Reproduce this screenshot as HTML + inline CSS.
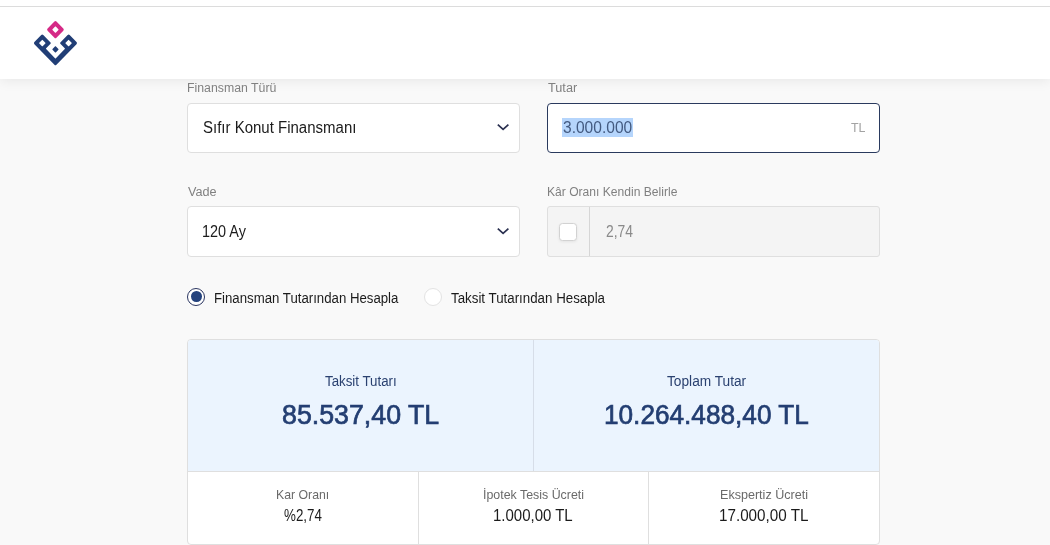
<!DOCTYPE html>
<html lang="tr">
<head>
<meta charset="utf-8">
<title>Finansman Hesaplama</title>
<style>
*{box-sizing:border-box;margin:0;padding:0}
html,body{width:1050px;height:545px;overflow:hidden;background:#f9f9f9;font-family:"Liberation Sans",sans-serif;}
body{position:relative}
.abs{position:absolute}
.t{position:absolute;white-space:nowrap;transform-origin:0 50%;line-height:1.2}
#tx{position:absolute;left:0;top:0;width:1050px;height:545px;will-change:transform}
.topline{left:0;top:0;width:1050px;height:7px;background:#fff;border-bottom:1px solid #dcdcdc}
.header{left:0;top:7px;width:1050px;height:72px;background:#fff;box-shadow:0 2px 12px rgba(0,0,0,.075)}
.box{background:#fff;border:1px solid #dfdfdf;border-radius:4px}
</style>
</head>
<body>
<div class="abs header"></div>
<div class="abs topline"></div>
<svg class="abs" style="left:30px;top:17px" width="52" height="52" viewBox="0 0 52 52">
  <g transform="translate(25.45,3.55) scale(1.02,1.043) rotate(45)">
    <rect x="0" y="0" width="12.3" height="12.3" rx="1.4" fill="#d52a86"/>
    <rect x="3.9" y="3.9" width="4.5" height="4.5" rx="0.4" fill="#fff"/>
    <path d="M1.4 18.3 H11.5 Q12.3 18.3 12.3 19.1 V25.2 Q12.3 25.8 12.9 25.8 H25.2 Q25.8 25.8 25.8 25.2 V12.9 Q25.8 12.3 25.2 12.3 H19.1 Q18.3 12.3 18.3 11.5 V1.4 Q18.3 0 19.7 0 H29.2 Q30.6 0 30.6 1.4 V29.2 Q30.6 30.6 29.2 30.6 H1.4 Q0 30.6 0 29.2 V19.7 Q0 18.3 1.4 18.3 Z" fill="#213e76"/>
    <rect x="22.1" y="3.9" width="4.6" height="4.6" rx="0.4" fill="#fff"/>
    <rect x="3.9" y="22.1" width="4.6" height="4.6" rx="0.4" fill="#fff"/>
    <rect x="17.3" y="17.3" width="4.5" height="4.5" rx="0.4" fill="#213e76"/>
  </g>
</svg>

<div class="abs box" style="left:187px;top:103px;width:333px;height:50px"></div>
<svg class="abs" style="left:496px;top:122px" width="15" height="11" viewBox="0 0 15 11"><path d="M1.8 2.6 L7.1 7.3 L12.4 2.6" fill="none" stroke="#2a3050" stroke-width="1.7" stroke-linecap="butt" stroke-linejoin="miter"/></svg>

<div class="abs box" style="left:547px;top:103px;width:333px;height:50px;border-color:#2a3a5e"></div>
<div class="abs" style="left:562px;top:118px;width:71px;height:18.5px;background:#b5d5fc"></div>

<div class="abs box" style="left:187px;top:206px;width:333px;height:51px"></div>
<svg class="abs" style="left:496px;top:226px" width="15" height="11" viewBox="0 0 15 11"><path d="M1.8 2.6 L7.1 7.3 L12.4 2.6" fill="none" stroke="#2a3050" stroke-width="1.7" stroke-linecap="butt" stroke-linejoin="miter"/></svg>

<div class="abs box" style="left:547px;top:206px;width:333px;height:51px;background:#f4f4f4;border-radius:3px"></div>
<div class="abs" style="left:589px;top:207px;width:1px;height:49px;background:#d6d6d6"></div>
<div class="abs" style="left:559px;top:223px;width:18px;height:18px;background:#fff;border:1px solid #d2d2d2;border-radius:3.5px;box-shadow:0 1px 3px rgba(0,0,0,.07)"></div>

<div class="abs" style="left:186.7px;top:287.6px;width:18.4px;height:18.4px;border-radius:50%;border:1.2px solid #2a3560;background:#fff"></div>
<div class="abs" style="left:190.9px;top:291px;width:10.8px;height:10.8px;border-radius:50%;background:#24427c"></div>
<div class="abs" style="left:423.9px;top:287.6px;width:18.4px;height:18.4px;border-radius:50%;border:1px solid #e3e3e3;background:#fff"></div>

<div class="abs" style="left:187px;top:339px;width:693px;height:206px;border:1px solid #dfdfdf;border-radius:4px;background:#fff"></div>
<div class="abs" style="left:188px;top:340px;width:691px;height:131px;background:#ebf4fe;border-radius:3px 3px 0 0"></div>
<div class="abs" style="left:188px;top:471px;width:691px;height:1px;background:#dfdfdf"></div>
<div class="abs" style="left:533px;top:340px;width:1px;height:131px;background:#d6dde8"></div>
<div class="abs" style="left:418px;top:472px;width:1px;height:72px;background:#dfdfdf"></div>
<div class="abs" style="left:648px;top:472px;width:1px;height:72px;background:#dfdfdf"></div>

<div id="tx">
<div class="t" style="left:186.6px;top:80.80px;font-size:12px;color:#808080;transform:scaleX(1.0257);">Finansman Türü</div>
<div class="t" style="left:203.2px;top:117.80px;font-size:16px;color:#1b1b1b;transform:scaleX(0.9374);">Sıfır Konut Finansmanı</div>
<div class="t" style="left:547.6px;top:80.80px;font-size:12px;color:#808080;transform:scaleX(1.0594);">Tutar</div>
<div class="t" style="left:563.2px;top:117.80px;font-size:16px;color:#435a80;transform:scaleX(0.9721);">3.000.000</div>
<div class="t" style="left:850.8px;top:119.70px;font-size:13px;color:#a3a3a3;transform:scaleX(0.9557);">TL</div>
<div class="t" style="left:187.9px;top:184.90px;font-size:12px;color:#808080;transform:scaleX(1.0538);">Vade</div>
<div class="t" style="left:201.9px;top:222.00px;font-size:16px;color:#1b1b1b;transform:scaleX(0.9025);">120 Ay</div>
<div class="t" style="left:546.6px;top:184.90px;font-size:12px;color:#808080;transform:scaleX(1.0077);">Kâr Oranı Kendin Belirle</div>
<div class="t" style="left:605.8px;top:222.00px;font-size:16px;color:#8a8a8a;transform:scaleX(0.8670);">2,74</div>
<div class="t" style="left:213.8px;top:290.00px;font-size:14px;color:#1b1b1b;transform:scaleX(0.9440);">Finansman Tutarından Hesapla</div>
<div class="t" style="left:451.1px;top:290.00px;font-size:14px;color:#1b1b1b;transform:scaleX(0.9514);">Taksit Tutarından Hesapla</div>
<div class="t" style="left:325.2px;top:372.90px;font-size:14px;color:#2a4170;transform:scaleX(0.9501);">Taksit Tutarı</div>
<div class="t" style="left:281.7px;top:398.10px;font-size:27.5px;color:#233e72;transform:scaleX(0.9729);-webkit-text-stroke:0.7px #233e72;">85.537,40 TL</div>
<div class="t" style="left:667.2px;top:372.90px;font-size:14px;color:#2a4170;transform:scaleX(0.9785);">Toplam Tutar</div>
<div class="t" style="left:603.8px;top:398.10px;font-size:27.5px;color:#233e72;transform:scaleX(0.9521);-webkit-text-stroke:0.7px #233e72;">10.264.488,40 TL</div>
<div class="t" style="left:275.8px;top:487.30px;font-size:13px;color:#6a6a6a;transform:scaleX(0.9439);">Kar Oranı</div>
<div class="t" style="left:283.6px;top:506.00px;font-size:16px;color:#1b1b1b;transform:scaleX(0.8353);">%2,74</div>
<div class="t" style="left:483.2px;top:487.30px;font-size:13px;color:#6a6a6a;transform:scaleX(0.9531);">İpotek Tesis Ücreti</div>
<div class="t" style="left:492.8px;top:506.00px;font-size:16px;color:#1b1b1b;transform:scaleX(0.9364);">1.000,00 TL</div>
<div class="t" style="left:720.1px;top:487.30px;font-size:13px;color:#6a6a6a;transform:scaleX(0.9667);">Ekspertiz Ücreti</div>
<div class="t" style="left:719.2px;top:506.00px;font-size:16px;color:#1b1b1b;transform:scaleX(0.9509);">17.000,00 TL</div>
</div>
</body>
</html>
